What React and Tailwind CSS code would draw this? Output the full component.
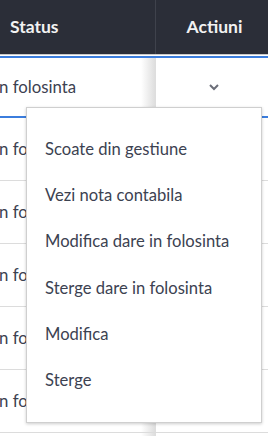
export default function App() {
  const items = [
    "Scoate din gestiune",
    "Vezi nota contabila",
    "Modifica dare in folosinta",
    "Sterge dare in folosinta",
    "Modifica",
    "Sterge",
  ];
  const rows = [0, 1, 2, 3, 4, 5, 6];
  return (
    <div className="relative w-[268px] h-[436px] overflow-hidden bg-white font-['Lato',sans-serif] text-[#3c4251]">
      <div className="flex h-[54px] bg-[#2b2e38] text-[#f2f2f2] font-bold text-[17.5px]">
        <div className="w-[156px] flex items-center pl-[10px] border-r border-[#3f424c]">Status</div>
        <div className="flex-1 flex items-center justify-center pl-[5px]">Actiuni</div>
      </div>
      <div className="h-px bg-[#c9c9c9]" />
      <div className="h-px bg-white" />
      <div className="h-[2px] bg-[#3b7ddd]" />
      {rows.map((r) => (
        <div
          key={r}
          className={
            r === 0
              ? "flex shrink-0 h-[60px] border-b-2 border-[#3b7ddd]"
              : "flex shrink-0 h-[63px] border-b border-[#dcdcdc]"
          }
        >
          <div className="relative w-[156px] overflow-hidden flex items-center border-r border-[#dedede]">
            <span className="ml-[-5px] whitespace-nowrap text-[16.8px]">in folosinta</span>
            <div className="absolute right-0 top-0 bottom-0 w-[14px] bg-gradient-to-r from-white to-[#dedede]" />
          </div>
          <div className="flex-1 flex items-center justify-center pl-[5px]">
            {r === 0 && (
              <svg width="12" height="8" viewBox="0 0 12 8" className="ml-[-2px]">
                <path d="M2 2l4 4 4-4" fill="none" stroke="#6b6e78" strokeWidth="2" />
              </svg>
            )}
          </div>
        </div>
      ))}
      <div className="absolute left-[26px] top-[107px] w-[236px] h-[316px] bg-white border border-[#cfcfcf] shadow-[0_1px_3px_rgba(0,0,0,0.2)] pt-[18px]">
        {items.map((t) => (
          <div key={t} className="h-[46.3px] flex items-center pl-[18px] text-[16.6px] text-[#3c4251] whitespace-nowrap">
            {t}
          </div>
        ))}
      </div>
    </div>
  );
}
